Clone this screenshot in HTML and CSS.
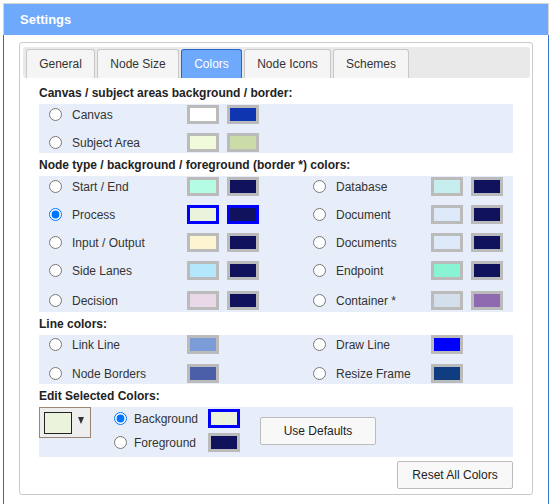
FILE: index.html
```html
<!DOCTYPE html>
<html>
<head>
<meta charset="utf-8">
<title>Settings</title>
<link rel="stylesheet" href="styles.css">
</head>
<body>
<div class="dialog">
  <div class="titlebar">Settings</div>
  <div class="dialog-body">
    <div class="panel">
      <div class="tabbar">
        <div class="tab t1">General</div>
        <div class="tab t2">Node Size</div>
        <div class="tab t3 active">Colors</div>
        <div class="tab t4">Node Icons</div>
        <div class="tab t5">Schemes</div>
      </div>
      <div class="content">
        <div class="heading">Canvas / subject areas background / border:</div>
        <div class="block b1">
          <div class="row">
            <label class="opt"><input type="radio" name="sel"><span>Canvas</span></label>
            <span class="sw" style="background:#ffffff"></span>
            <span class="sw" style="background:#1035b0"></span>
          </div>
          <div class="row">
            <label class="opt"><input type="radio" name="sel"><span>Subject Area</span></label>
            <span class="sw" style="background:#f1fbdc"></span>
            <span class="sw" style="background:#ccdca8"></span>
          </div>
        </div>

        <div class="heading">Node type / background / foreground (border *) colors:</div>
        <div class="block b2">
          <div class="row">
            <label class="opt"><input type="radio" name="sel"><span>Start / End</span></label>
            <span class="sw" style="background:#b4fce4"></span>
            <span class="sw" style="background:#10125c"></span>
            <span></span>
            <label class="opt"><input type="radio" name="sel"><span>Database</span></label>
            <span class="sw" style="background:#c6eeee"></span>
            <span class="sw" style="background:#10125c"></span>
          </div>
          <div class="row">
            <label class="opt"><input type="radio" name="sel" checked><span>Process</span></label>
            <span class="sw sel" style="background:#ebf3dc"></span>
            <span class="sw sel" style="background:#10125c"></span>
            <span></span>
            <label class="opt"><input type="radio" name="sel"><span>Document</span></label>
            <span class="sw" style="background:#dde8f8"></span>
            <span class="sw" style="background:#10125c"></span>
          </div>
          <div class="row">
            <label class="opt"><input type="radio" name="sel"><span>Input / Output</span></label>
            <span class="sw" style="background:#fdf4d2"></span>
            <span class="sw" style="background:#10125c"></span>
            <span></span>
            <label class="opt"><input type="radio" name="sel"><span>Documents</span></label>
            <span class="sw" style="background:#dde8f8"></span>
            <span class="sw" style="background:#10125c"></span>
          </div>
          <div class="row">
            <label class="opt"><input type="radio" name="sel"><span>Side Lanes</span></label>
            <span class="sw" style="background:#b4e6fc"></span>
            <span class="sw" style="background:#10125c"></span>
            <span></span>
            <label class="opt"><input type="radio" name="sel"><span>Endpoint</span></label>
            <span class="sw" style="background:#88f4d4"></span>
            <span class="sw" style="background:#10125c"></span>
          </div>
          <div class="row row-last">
            <label class="opt"><input type="radio" name="sel"><span>Decision</span></label>
            <span class="sw" style="background:#e9d8e8"></span>
            <span class="sw" style="background:#10125c"></span>
            <span></span>
            <label class="opt"><input type="radio" name="sel"><span>Container *</span></label>
            <span class="sw" style="background:#d4dfec"></span>
            <span class="sw" style="background:#906ab0"></span>
          </div>
        </div>

        <div class="heading">Line colors:</div>
        <div class="block b3">
          <div class="row">
            <label class="opt"><input type="radio" name="sel"><span>Link Line</span></label>
            <span class="sw" style="background:#7b9cd6"></span>
            <span></span>
            <span></span>
            <label class="opt"><input type="radio" name="sel"><span>Draw Line</span></label>
            <span class="sw" style="background:#0000ff"></span>
            <span></span>
          </div>
          <div class="row">
            <label class="opt"><input type="radio" name="sel"><span>Node Borders</span></label>
            <span class="sw" style="background:#4a5fa8"></span>
            <span></span>
            <span></span>
            <label class="opt"><input type="radio" name="sel"><span>Resize Frame</span></label>
            <span class="sw" style="background:#103c80"></span>
            <span></span>
          </div>
        </div>

        <div class="heading">Edit Selected Colors:</div>
        <div class="block b4">
          <div class="picker">
            <span class="picker-sw"></span>
            <span class="caret"></span>
          </div>
          <div class="fgbg">
            <label class="fgbg-row"><input type="radio" name="fgbg" checked><span class="lbl">Background</span><span class="sw sel" style="background:#ebf3dc"></span></label>
            <label class="fgbg-row"><input type="radio" name="fgbg"><span class="lbl">Foreground</span><span class="sw" style="background:#10125c"></span></label>
          </div>
          <button class="btn use-defaults" type="button">Use Defaults</button>
        </div>

        <div class="reset-row">
          <button class="btn" type="button">Reset All Colors</button>
        </div>
      </div>
    </div>
  </div>
</div>
</body>
</html>
```

FILE: styles.css
```css
html, body {
  margin: 0;
  padding: 0;
  background: #ffffff;
  overflow: hidden;
}

body {
  font-family: "Liberation Sans", Arial, sans-serif;
  font-size: 12px;
  color: #333333;
}

.dialog {
  margin: 3px 0 0 3px;
  width: 546px;
  height: 501px;
  display: flex;
  flex-direction: column;
}

.titlebar {
  height: 32px;
  box-sizing: border-box;
  border: 1px solid #d6d6d6;
  border-bottom: none;
  background: #6fa9fb;
  color: #ffffff;
  font-weight: bold;
  font-size: 13px;
  line-height: 31px;
  padding-left: 16px;
}

.dialog-body {
  flex: 1;
  border-left: 1px solid #3b66b4;
  border-right: 1px solid #3b78d4;
  padding: 7px 15px 0;
}

.panel {
  border: 1px solid #cacaca;
  border-radius: 3px;
  padding: 4px 2px 5px 3px;
}

.tabbar {
  display: flex;
  gap: 2px;
  height: 31px;
  box-sizing: border-box;
  padding: 2px 0 0 3px;
  background: #e9e9e9;
  border-radius: 3px;
}

.tab {
  height: 29px;
  box-sizing: border-box;
  border: 1px solid #c8c8c8;
  border-bottom: none;
  border-radius: 3px 3px 0 0;
  background: #f5f5f5;
  display: flex;
  align-items: center;
  justify-content: center;
  color: #333333;
}

.t1 { width: 69px; }
.t2 { width: 82px; }
.t3 { width: 61px; }
.t4 { width: 87px; }
.t5 { width: 76px; }

.tab.active {
  background: #6fa9fb;
  border-color: #2a66d0;
  color: #ffffff;
}

.content {
  padding: 3px 17px 0 16px;
}

.heading {
  font-weight: bold;
  color: #222222;
  line-height: 21px;
  padding-top: 2px;
}

.block {
  background: #e7eef9;
  display: flex;
  flex-direction: column;
}

.b1 {
  padding: 1px 0 1px;
  gap: 9px;
}

.b2 {
  padding: 1px 0 2px;
  gap: 9px;
}

.row-last {
  margin-top: 2px;
}

.b3 {
  padding: 0 0 1px;
  gap: 10px;
}

.row {
  display: grid;
  grid-template-columns: 140px 32px 32px 28px 120px 32px 32px;
  column-gap: 8px;
  height: 19px;
  align-items: center;
}

.opt {
  display: flex;
  align-items: center;
  white-space: nowrap;
}

.opt input {
  margin: 0 10px;
  width: 13px;
  height: 13px;
}

.sw {
  display: block;
  width: 32px;
  height: 19px;
  box-sizing: border-box;
  border: 3px solid #bbbbbb;
}

.sw.sel {
  border-color: #0000ff;
}

.b4 {
  height: 50px;
  flex-direction: row;
  align-items: flex-start;
}

.picker {
  width: 52px;
  height: 31px;
  box-sizing: border-box;
  border: 1px solid #9a8473;
  background: #eeeeee;
  display: flex;
  align-items: flex-start;
  padding: 4px 0 0 4px;
}

.picker-sw {
  width: 28px;
  height: 22px;
  box-sizing: border-box;
  border: 1px solid #222222;
  background: #ebf3dc;
}

.caret {
  margin: 5px 0 0 6px;
  width: 0;
  height: 0;
  border-left: 3.5px solid transparent;
  border-right: 3.5px solid transparent;
  border-top: 7px solid #333333;
}

.fgbg {
  margin-left: 23px;
  padding-top: 2px;
  display: flex;
  flex-direction: column;
  gap: 5px;
}

.fgbg-row {
  display: flex;
  align-items: center;
  height: 19px;
}

.fgbg-row input {
  margin: 0 7px 0 0;
  width: 13px;
  height: 13px;
}

.lbl {
  width: 74px;
}

.btn {
  width: 116px;
  height: 28px;
  box-sizing: border-box;
  border: 1px solid #bcbcbc;
  border-radius: 2px;
  background: #f8f8f8;
  font-family: inherit;
  font-size: 12px;
  color: #222222;
  padding: 0;
}

.use-defaults {
  margin: 10px 0 0 20px;
}

.reset-row {
  display: flex;
  justify-content: flex-end;
  margin-top: 4px;
}
```
